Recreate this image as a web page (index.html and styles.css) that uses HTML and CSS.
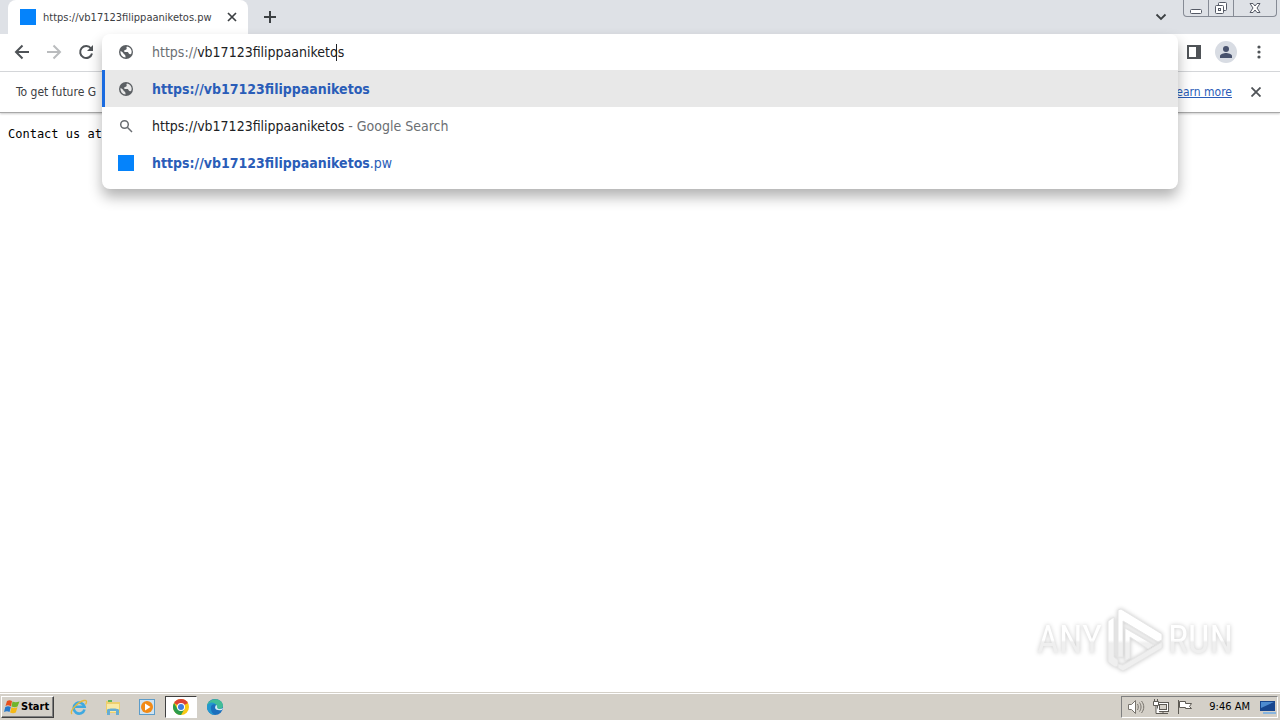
FILE: index.html
```html
<!DOCTYPE html>
<html lang="en">

<head>
    <meta charset="UTF-8">
    <meta name="viewport" content="width=device-width, initial-scale=1.0">
    <title>https://vb17123filippaaniketos.pw</title>
    <link rel="stylesheet" href="styles.css">
</head>

<body>
    <!-- Tab strip -->
    <header class="tab-strip">
        <div class="tab">
            <span class="favicon"></span>
            <span class="tab-title">https://vb17123filippaaniketos.pw</span>
            <button type="button" class="icon-btn tab-close" aria-label="Close tab">
                <svg width="10" height="10" viewBox="0 0 10 10"><path d="M1 1l8 8M9 1l-8 8" stroke="#3c4043" stroke-width="1.7"/></svg>
            </button>
        </div>
        <button type="button" class="icon-btn new-tab" aria-label="New tab">
            <svg width="12" height="12" viewBox="0 0 12 12"><path d="M6 0v12M0 6h12" stroke="#3c4043" stroke-width="2"/></svg>
        </button>
        <div class="strip-end">
            <button type="button" class="icon-btn" aria-label="Search tabs">
                <svg width="12" height="8" viewBox="0 0 12 8"><path d="M1.500 1.500L6 6l4.500-4.500" fill="none" stroke="#3c4043" stroke-width="1.800"/></svg>
            </button>
            <div class="window-controls">
                <button type="button" aria-label="Minimize">
                    <svg width="14" height="14" viewBox="0 0 14 14"><rect x="1.500" y="8.500" width="11" height="4" rx="1" fill="#fff" stroke="#555a66"/></svg>
                </button>
                <button type="button" aria-label="Restore">
                    <svg width="14" height="14" viewBox="0 0 14 14" fill="#fff" stroke="#555a66"><rect x="4.500" y="1.500" width="8" height="8" rx="1"/><rect x="1.500" y="4.500" width="8" height="8" rx="1"/><rect x="4.500" y="7.500" width="2" height="2"/></svg>
                </button>
                <button type="button" class="close" aria-label="Close">
                    <svg width="14" height="14" viewBox="0 0 14 14"><path d="M2 2.500h3l2 2.500 2-2.500h3L9 7l3 4.500H9L7 9l-2 2.500H2L5 7z" fill="#fff" stroke="#555a66"/></svg>
                </button>
            </div>
        </div>
    </header>

    <!-- Toolbar -->
    <nav class="toolbar">
        <button type="button" class="icon-btn" aria-label="Back">
            <svg width="16" height="16" viewBox="0 0 16 16" fill="none" stroke="#4f5357" stroke-width="2"><path d="M15 8H2M8.500 1.500L2 8l6.500 6.500"/></svg>
        </button>
        <button type="button" class="icon-btn" aria-label="Forward" disabled>
            <svg width="16" height="16" viewBox="0 0 16 16" fill="none" stroke="#babcbe" stroke-width="2"><path d="M1 8h13M7.500 1.500L14 8l-6.500 6.500"/></svg>
        </button>
        <button type="button" class="icon-btn" aria-label="Reload">
            <svg width="16" height="16" viewBox="0 0 16 16"><path d="M13 4.500A6 6 0 1 0 14 9.500" fill="none" stroke="#4f5357" stroke-width="2"/><path d="M15 1v6H9z" fill="#4f5357"/></svg>
        </button>
        <div class="toolbar-end">
            <button type="button" class="icon-btn" aria-label="Side panel">
                <svg width="14" height="14" viewBox="0 0 14 14"><path d="M0 0h14v14H0zM2 2v10h7V2z" fill="#4f5357" fill-rule="evenodd"/></svg>
            </button>
            <button type="button" class="icon-btn" aria-label="Profile">
                <svg width="22" height="22" viewBox="0 0 22 22"><circle cx="11" cy="11" r="11" fill="#d8dce3"/><circle cx="11" cy="8" r="3" fill="#48526d"/><path d="M5 17v-2c0-2 4-3 6-3s6 1 6 3v2z" fill="#48526d"/></svg>
            </button>
            <button type="button" class="icon-btn" aria-label="Menu">
                <svg width="4" height="14" viewBox="0 0 4 14" fill="#4f5357"><circle cx="2" cy="2" r="1.600"/><circle cx="2" cy="7" r="1.600"/><circle cx="2" cy="12" r="1.600"/></svg>
            </button>
        </div>

        <!-- Address bar with its suggestions -->
        <div class="omnibox">
            <div class="row address-row">
                <svg class="row-icon" width="16" height="16" viewBox="0 0 16 16"><circle cx="8" cy="8" r="7" fill="#5b5f63"/><path d="M9 2.400C7.500 4 9.800 4.200 8 5.500c-1 .8-2 .5-2 1.500s1.500 1 3 1c2 0 1.200 2.200 3 2.200.8 0 1.200-.5 1.500-1A5.600 5.600 0 0 0 9 2.400zM2.500 7a5.600 5.600 0 0 0 5 6.600c.3-1-.2-1.300-.2-2 0-1-1.300-.8-1.800-2C5 8.400 3.800 7.500 2.500 7z" fill="#fff"/></svg>
                <label class="scheme" for="address">https://</label>
                <span class="address-wrap">
                    <input type="text" id="address" value="vb17123filippaaniketos" autocomplete="off" spellcheck="false">
                    <span class="caret"></span>
                </span>
            </div>
            <a class="row selected" href="#">
                <svg class="row-icon" width="16" height="16" viewBox="0 0 16 16"><circle cx="8" cy="8" r="7" fill="#5b5f63"/><path d="M9 2.400C7.500 4 9.800 4.200 8 5.500c-1 .8-2 .5-2 1.500s1.500 1 3 1c2 0 1.200 2.200 3 2.200.8 0 1.200-.5 1.500-1A5.600 5.600 0 0 0 9 2.400zM2.500 7a5.600 5.600 0 0 0 5 6.600c.3-1-.2-1.300-.2-2 0-1-1.300-.8-1.800-2C5 8.400 3.800 7.500 2.500 7z" fill="#e8e8e8"/></svg>
                <span class="url"><b>https://vb17123filippaaniketos</b></span>
            </a>
            <a class="row" href="#">
                <svg class="row-icon" width="16" height="16" viewBox="0 0 16 16" fill="none" stroke="#6a6e72" stroke-width="1.500"><circle cx="6.500" cy="6.500" r="3.800"/><path d="M9.300 9.300l4.700 4.700"/></svg>
                <span class="query">https://vb17123filippaaniketos<span class="hint"> - Google Search</span></span>
            </a>
            <a class="row" href="#">
                <span class="row-icon favicon"></span>
                <span class="url"><b>https://vb17123filippaaniketos</b>.pw</span>
            </a>
        </div>
    </nav>

    <!-- Info bar -->
    <div class="infobar">
        <span class="infobar-text">To get future G</span>
        <a class="learn-more" href="#">Learn more</a>
        <button type="button" class="icon-btn" aria-label="Dismiss">
            <svg width="10" height="10" viewBox="0 0 10 10"><path d="M.5.5l9 9M9.500.5l-9 9" stroke="#4f5357" stroke-width="1.800"/></svg>
        </button>
    </div>

    <main class="page">
        <pre>Contact us at</pre>
        <div class="watermark">
            <span class="word">ANY</span>
            <svg width="58" height="64" viewBox="0 0 58 64" stroke-linejoin="round">
                <defs>
                    <linearGradient id="fade" x1="0" y1="0" x2="0" y2="64" gradientUnits="userSpaceOnUse">
                        <stop offset=".5" stop-color="#fff"/>
                        <stop offset=".55" stop-color="#efefef"/>
                    </linearGradient>
                </defs>
                <g fill="url(#fade)" stroke="#e6e6e6">
                    <path d="M2 13l6-4v40l4 3v6l-3 1-7-5z"/>
                    <path d="M12 2l3-1 41 25v6l-4 2-35-21v36h-5z"/>
                    <path d="M56 34v6L17 63l-5-3v-4l5 1z"/>
                    <path d="M19 20l29 17-6 4-18-12v21l-5 3z"/>
                </g>
            </svg>
            <span class="word">RUN</span>
        </div>
    </main>

    <!-- Taskbar -->
    <footer class="taskbar">
        <button type="button" class="start">
            <svg width="16" height="16" viewBox="0 0 16 16"><path d="M3 2c2-1 3-1 5 0L7 7.500C5 6 3 6 1.500 7z" fill="#e8501c"/><path d="M8.500 2.500c2 1 4 1 7 0L13.500 7.500c-2 1-3.500 1-6 0z" fill="#71b52c"/><path d="M1.300 8c2-1 3.500-1 5.500 0l-1.300 5C4 12 2 12 0 13z" fill="#2779cb"/><path d="M7.500 8.200c2 1 3.500 1 6 0l-1.700 5.300c-2 1-3.500 1-5.700 0z" fill="#f5b917"/></svg>
            Start
        </button>
        <div class="quick-launch">
            <button type="button" class="task" aria-label="Internet Explorer">
                <svg width="18" height="18" viewBox="0 0 18 18" fill="none"><path d="M14.500 11.500A5.500 5.500 0 1 1 14.500 8.700H5" stroke="#3fa9e0" stroke-width="2.600"/><path d="M2 16C-1 13 8 4 14 2.500c3-.7 3 1.500 1.500 4" stroke="#e5b93c" stroke-width="1.300"/></svg>
            </button>
            <button type="button" class="task" aria-label="Explorer">
                <svg width="18" height="18" viewBox="0 0 18 18"><path d="M2 3h5l1 1h8v11H2z" fill="#edcf6e"/><path d="M4 2h4v2H4z" fill="#61b45a"/><path d="M3 6h12v8H3z" fill="#f8e9a5"/><path d="M3 17v-5c0-2 12-2 12 0v5h-3v-4H6v4z" fill="#66add3"/></svg>
            </button>
            <button type="button" class="task" aria-label="Media Player">
                <svg width="18" height="18" viewBox="0 0 18 18"><rect x="1.500" y="1.500" width="15" height="15" fill="#cfe3f1" stroke="#5c9cc9"/><circle cx="9" cy="9" r="6" fill="#f28a15"/><path d="M7 5.500l5.500 3.500L7 12.500z" fill="#fff"/></svg>
            </button>
            <button type="button" class="task active" aria-label="Chrome">
                <svg width="16" height="16" viewBox="0 0 16 16"><circle cx="8" cy="8" r="8" fill="#f9c915"/><path d="M8 8L1.070 4A8 8 0 0 1 14.930 4z" fill="#dd4336"/><path d="M1.070 4A8 8 0 0 0 8 16l3.500-6L8 8 4.500 10z" fill="#2d9c4c"/><circle cx="8" cy="8" r="4" fill="#fff"/><circle cx="8" cy="8" r="3" fill="#3f7de0"/></svg>
            </button>
            <button type="button" class="task" aria-label="Edge">
                <svg width="16" height="16" viewBox="0 0 16 16"><circle cx="8" cy="8" r="8" fill="#1b6fbd"/><path d="M0 7C1-2 16-2 16 7c0 3-5 4-6 2 1-3-2-5-5-4C2 5 0 7 0 9z" fill="#42bd97"/><path d="M0 7c1-4 7-5 9-1-3-2-6 1-5 4 0 3 2 5 4 6-4 0-9-4-8-9z" fill="#2498cf"/><path d="M9 6c-2 3-1 6 6 5l1-2c-3 2-6 1-6-1 .5-1 0-2-1-2z" fill="#d5edf4"/></svg>
            </button>
        </div>
        <div class="tray">
            <svg width="18" height="16" viewBox="0 0 18 16" fill="none" stroke="#77736c"><path d="M1.500 5.500h3l4-4v13l-4-4h-3z" fill="#fff"/><path d="M10.500 5c1 2 1 4 0 6M12.500 3.500c2 3 2 6 0 9M14.500 2c3 4 3 8 0 12"/></svg>
            <svg width="16" height="16" viewBox="0 0 16 16" fill="#fff" stroke="#5d5a54"><rect x="4.500" y="3.500" width="11" height="9"/><rect x="6.500" y="5.500" width="7" height="5" fill="#d4d0c8"/><path d="M7 14.500h8M10 12.500v2M.5 2.500h5v4h-5zM1.500 0v2M4.500 0v2M3 6.500v8h4"/></svg>
            <svg width="16" height="16" viewBox="0 0 16 16" fill="#fff" stroke="#5d5a54"><path d="M1.500 1v14"/><path d="M2.500 2.500h6v2h6l-2 3 2 2h-6v-1h-6z"/></svg>
            <time class="clock">9:46 AM</time>
            <svg width="16" height="16" viewBox="0 0 16 16"><path d="M0 2h15v10H0z" fill="#17468f"/><path d="M1 3h13L1 9z" fill="#4d8bd0"/><path d="M3 13h13v2H3z" fill="#87b5df"/></svg>
        </div>
    </footer>
</body>

</html>
```
FILE: styles.css
```css
* {
    box-sizing: border-box;
}

body {
    margin: 0;
    height: 100vh;
    display: flex;
    flex-direction: column;
    overflow: hidden;
    background: #fff;
    color: #3c4043;
    font-family: "DejaVu Sans Condensed", "DejaVu Sans", sans-serif;
    font-size: 12px;
}

button {
    padding: 0;
    border: none;
    background: none;
    color: inherit;
    font: inherit;
}

svg {
    display: block;
    flex: none;
}

a {
    color: #2a5db8;
}

.icon-btn {
    display: flex;
    align-items: center;
    justify-content: center;
}

.favicon {
    flex: none;
    width: 16px;
    height: 16px;
    background: #0583fb;
}

/* Tab strip */
.tab-strip {
    display: flex;
    align-items: flex-start;
    height: 34px;
    padding-left: 8px;
    background: #dee1e6;
}

.tab {
    display: flex;
    align-items: center;
    width: 240px;
    height: 34px;
    padding: 0 11px 0 12px;
    border-radius: 8px 8px 0 0;
    background: #fff;
}

.tab-title {
    flex: 1;
    margin-left: 7px;
    font-size: 11px;
    white-space: nowrap;
}

.new-tab {
    width: 44px;
    height: 34px;
}

.strip-end {
    display: flex;
    gap: 16px;
    margin-left: auto;
    padding-right: 3px;
}

.strip-end .icon-btn {
    height: 34px;
}

.window-controls {
    display: flex;
    height: 17px;
    border: 1px solid #868b95;
    border-top: none;
    border-radius: 0 0 4px 4px;
}

.window-controls button {
    display: flex;
    align-items: center;
    justify-content: center;
    width: 25px;
    border-right: 1px solid #868b95;
}

.window-controls .close {
    width: 42px;
    border-right: none;
}

/* Toolbar */
.toolbar {
    position: relative;
    display: flex;
    align-items: center;
    gap: 16px;
    height: 38px;
    padding: 0 19px 2px 14px;
    border-bottom: 1px solid #d4d6d9;
}

.toolbar-end {
    display: flex;
    align-items: center;
    gap: 14px;
    margin-left: auto;
}

.toolbar-end .icon-btn:last-child {
    margin-left: 6px;
}

/* Address bar */
.omnibox {
    position: absolute;
    z-index: 1;
    top: 0;
    left: 102px;
    right: 102px;
    padding-bottom: 8px;
    border-radius: 8px;
    background: #fff;
    box-shadow: 0 8px 14px rgba(0, 0, 0, 0.3);
    font-size: 14px;
}

.row {
    display: flex;
    align-items: center;
    height: 37px;
    padding-left: 16px;
    text-decoration: none;
    white-space: nowrap;
}

.address-row {
    height: 36px;
}

.row-icon {
    margin-right: 18px;
}

.selected {
    background: #e8e8e8;
    box-shadow: inset 3px 0 #1a6be0;
}

.scheme {
    color: #6b6f73;
}

.address-wrap {
    position: relative;
    flex: 1;
}

.address-wrap input {
    display: block;
    width: 100%;
    padding: 0;
    border: none;
    outline: none;
    background: none;
    color: #202124;
    font: inherit;
}

.caret {
    position: absolute;
    top: 0;
    left: 139px;
    width: 1px;
    height: 17px;
    background: #202124;
}

.query {
    color: #202124;
}

.hint {
    color: #6b6f73;
}

/* Info bar */
.infobar {
    display: flex;
    align-items: center;
    height: 41px;
    padding: 0 19px 0 16px;
    border-bottom: 1px solid #a8a8a8;
    box-shadow: 0 1px 2px rgba(0, 0, 0, 0.2);
}

.learn-more {
    margin: 0 19px 0 auto;
}

/* Page */
.page {
    display: flex;
    flex: 1;
    flex-direction: column;
    justify-content: space-between;
    padding: 14px 47px 20px 8px;
}

pre {
    margin: 0;
    color: #000;
    font-family: "DejaVu Sans Mono", monospace;
    font-size: 12px;
}

.watermark {
    display: flex;
    align-items: center;
    gap: 4px;
    align-self: flex-end;
    font-family: "Roboto Condensed", "Liberation Sans Narrow", "Liberation Sans", sans-serif;
    font-size: 38px;
    filter: drop-shadow(0 0 2px #c8c8c8);
}

.word {
    background: linear-gradient(#fff 50%, #efefef 55%);
    background-clip: text;
    -webkit-background-clip: text;
    color: transparent;
}

/* Taskbar */
.taskbar {
    display: flex;
    align-items: center;
    height: 28px;
    padding: 0 2px 0 1px;
    border-top: 1px solid #d4d0c8;
    background: #d4d0c8;
    box-shadow: inset 0 1px #fff;
    color: #000;
    font-size: 11px;
}

.start {
    display: flex;
    align-items: center;
    gap: 1px;
    width: 53px;
    height: 22px;
    padding-left: 2px;
    border: 1px solid;
    border-color: #fff #404040 #404040 #fff;
    box-shadow: inset -1px -1px #808080;
    font-weight: bold;
}

.quick-launch {
    display: flex;
    gap: 2px;
    margin-left: 9px;
}

.task {
    display: flex;
    align-items: center;
    justify-content: center;
    width: 32px;
    height: 22px;
}

.active {
    border: 1px solid;
    border-color: #404040 #fff #fff #404040;
    background: #fff;
}

.tray {
    display: flex;
    align-items: center;
    gap: 8px;
    height: 22px;
    margin-left: auto;
    padding: 0 1px 0 5px;
    border: 1px solid;
    border-color: #808080 #fff #fff #808080;
}

.clock {
    margin: 0 2px 0 8px;
}
```
